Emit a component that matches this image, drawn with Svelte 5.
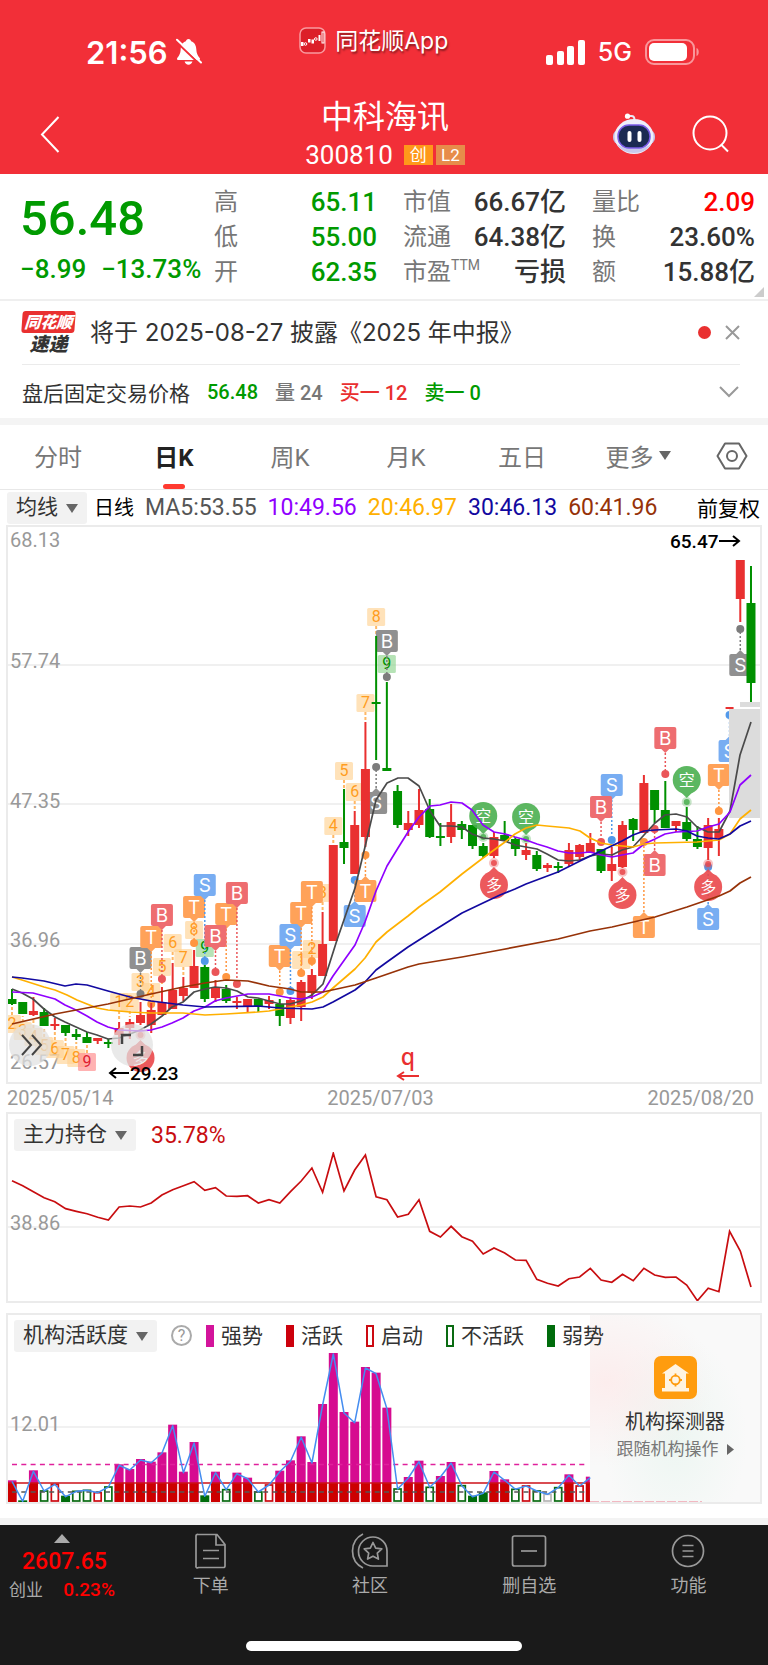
<script>
  const STEP = 10.71;
  const px = (i) => 12 + STEP * i;

  // [direction, high, low, body top, body bottom]
  const candles = [
    ['g', 989, 1005, 999, 1004], ['g', 1002, 1014, 1002, 1014], ['r', 997, 1016, 1011, 1015], ['g', 1008, 1026, 1012, 1026],
    ['r', 1018, 1030, 1024, 1026], ['g', 1025, 1036, 1025, 1033], ['g', 1029, 1040, 1034, 1037], ['g', 1032, 1043, 1037, 1043],
    ['r', 1038, 1044, 1038, 1041], ['g', 1039, 1048, 1042, 1044], ['r', 1022, 1045, 1028, 1035], ['r', 1019, 1039, 1022, 1028],
    ['r', 1002, 1025, 1015, 1023], ['r', 1003, 1033, 1010, 1025], ['r', 987, 1015, 1002, 1015], ['r', 963, 1009, 990, 1009],
    ['r', 977, 1001, 988, 996], ['r', 950, 988, 966, 988], ['g', 965, 1002, 967, 999], ['r', 980, 1002, 988, 998],
    ['g', 985, 1003, 989, 1001], ['r', 997, 1009, 1001, 1003], ['r', 999, 1012, 999, 1007], ['g', 999, 1012, 999, 1006],
    ['r', 996, 1009, 1000, 1004], ['g', 999, 1026, 1004, 1016], ['r', 997, 1024, 1000, 1018], ['r', 980, 1021, 982, 1007],
    ['r', 969, 999, 975, 993], ['r', 912, 976, 944, 976], ['r', 845, 941, 845, 941], ['g', 789, 864, 842, 848],
    ['r', 811, 874, 825, 874], ['r', 722, 847, 769, 837], ['g', 636, 760, 702, 703], ['g', 682, 770, 768, 771],
    ['g', 785, 828, 791, 825], ['r', 811, 836, 823, 830], ['r', 789, 828, 810, 825], ['g', 799, 838, 809, 837],
    ['g', 823, 846, 836, 838], ['r', 804, 843, 822, 837], ['g', 821, 839, 824, 830], ['g', 825, 849, 825, 846],
    ['g', 843, 858, 846, 856], ['r', 832, 858, 837, 856], ['g', 821, 841, 835, 841], ['g', 837, 856, 839, 849],
    ['r', 843, 860, 850, 855], ['g', 851, 871, 855, 869], ['r', 863, 872, 865, 868], ['g', 862, 873, 866, 868],
    ['r', 843, 867, 850, 864], ['r', 844, 860, 845, 857], ['r', 833, 853, 843, 853], ['g', 849, 873, 849, 871],
    ['r', 847, 881, 864, 871], ['r', 821, 868, 825, 867], ['g', 818, 841, 819, 830], ['r', 775, 833, 783, 833],
    ['g', 790, 823, 790, 810], ['g', 781, 828, 810, 828], ['r', 821, 832, 821, 826], ['g', 807, 841, 822, 839],
    ['g', 826, 849, 839, 847], ['r', 818, 860, 825, 848], ['r', 818, 856, 829, 838], ['r', 707, 709, 707, 709],
    ['r', 560, 622, 560, 599], ['g', 566, 702, 603, 683]
  ];

  const averages = [
    { color: '#4a4a4a', d: '12,989 22,993 33,999 44,1009 55,1017 65,1022 76,1027 87,1032 97,1035 108,1039 119,1038 130,1034 140,1030 151,1024 162,1016 172,1007 183,1002 194,992 205,989 215,987 226,988 237,991 248,997 258,998 269,1001 280,1004 290,1004 301,1001 312,995 323,984 337,940 355,888 365,847 376,800 387,783 398,778 408,778 419,786 430,811 440,826 451,826 462,827 472,834 483,838 494,839 505,841 515,845 526,847 537,849 547,854 558,860 569,861 580,860 590,856 601,854 612,855 622,850 633,847 644,835 655,823 665,815 676,814 687,817 697,827 708,832 719,832 730,811 740,755 751,722' },
    { color: '#9000ff', d: '12,992 33,993 44,996 55,999 65,1005 76,1010 87,1016 97,1022 108,1027 119,1030 140,1031 151,1030 162,1027 172,1023 183,1018 194,1011 205,1007 215,1001 226,998 237,996 248,994 269,994 280,996 290,998 301,999 312,997 323,992 333,976 355,945 365,922 376,891 387,866 398,848 408,832 419,817 430,806 440,805 451,802 462,803 472,810 483,825 494,832 505,834 515,837 526,840 537,844 547,847 558,851 569,853 580,853 590,852 601,855 612,857 622,855 633,853 644,844 655,839 665,834 676,832 697,831 708,827 719,824 730,812 740,785 751,775' },
    { color: '#ffb000', d: '12,977 22,980 44,987 55,990 67,995 77,1000 87,1004 97,1008 108,1010 130,1012 151,1013 183,1013 205,1015 226,1014 258,1012 269,1011 280,1009 290,1007 301,1005 312,1002 323,997 333,988 355,969 365,958 376,942 387,932 408,916 419,907 440,892 462,874 483,858 505,842 515,834 526,828 537,825 547,826 569,828 580,831 590,838 601,843 612,845 633,847 644,844 655,843 697,842 719,840 730,834 740,819 751,810' },
    { color: '#1209a0', d: '12,977 22,978 44,981 65,986 76,984 87,985 108,991 130,997 151,1001 183,1005 205,1007 258,1006 269,1007 280,1008 312,1009 323,1007 333,1002 355,990 365,982 376,970 387,962 408,947 430,933 462,913 483,903 500,895 515,889 526,884 558,872 580,861 601,851 622,841 633,835 644,831 655,830 676,829 687,831 697,836 708,838 719,839 730,834 740,826 751,821' },
    { color: '#963208', d: '12,1024 55,1014 108,1004 151,994 183,987 205,983 226,980 248,981 269,986 290,989 301,992 323,992 355,985 376,978 408,967 419,964 462,957 500,950 558,939 590,931 612,927 655,917 687,907 719,896 730,891 740,883 751,877' }
  ];

  // [digit, candle index, centre y, tone, stem end y]
  const counts = [
    ['2', 0, 1024, 'o', 1006], ['3', 1, 1031, 'o', 1016], ['4', 2, 1037, 'o', 1018], ['5', 3, 1046, 'o', 1028], ['6', 4, 1049, 'o', 1032],
    ['7', 5, 1055, 'o', 1038], ['8', 6, 1058, 'o', 1042], ['9', 7, 1062, 'r', 1045],
    ['1', 10, 1002, 'o', 1020], ['2', 11, 1002, 'o', 1017], ['3', 12, 982, 'o', 1000], ['4', 13, 992, 'o', 1002], ['5', 14, 967, 'o', 985],
    ['6', 15, 943, 'o', 961], ['7', 16, 958, 'o', 975], ['8', 17, 930, 'o', 948], ['9', 18, 948, 'g', 963],
    ['1', 27, 960, 'o', 978], ['2', 28, 949, 'o', 967], ['3', 29, 893, 'o', 910], ['4', 30, 826, 'o', 843], ['5', 31, 771, 'o', 788],
    ['6', 32, 792, 'o', 809], ['7', 33, 703, 'o', 720], ['8', 34, 617, 'o', 634], ['9', 35, 664, 'g', 682]
  ];

  // [letter, tone, candle index, centre y, dot y]
  const signals = [
    ['B', 'x', 12, 958, 994], ['T', 'o', 13, 937, 1004], ['B', 'r', 14, 915, 979], ['T', 'o', 17, 907, 943], ['S', 'b', 18, 885, 961],
    ['T', 'o', 20, 914, 977], ['B', 'r', 19, 936, 972], ['B', 'r', 21, 893, 984], ['T', 'o', 25, 956, 992], ['S', 'b', 26, 935, 991],
    ['T', 'o', 27, 913, 973], ['T', 'o', 28, 892, 961], ['S', 'b', 32, 916, 880], ['T', 'o', 33, 891, 855], ['S', 'x', 34, 803, 767],
    ['B', 'x', 35, 641, 677], ['S', 'b', 56, 785, 840], ['B', 'r', 55, 807, 842], ['B', 'r', 60, 865, 829], ['T', 'o', 59, 927, 842],
    ['B', 'r', 61, 738, 774], ['S', 'b', 65, 919, 867], ['T', 'o', 66, 775, 811], ['S', 'b', 67, 751, 715], ['S', 'x', 68, 665, 629]
  ];
  const bubbles = [
    ['空', 'g', 44, 816, 837], ['空', 'g', 48, 817, 839], ['空', 'g', 63, 780, 802],
    ['多', 'r', 45, 885, 863], ['多', 'r', 57, 895, 872], ['多', 'r', 65, 887, 864], ['多', 'r', 12, 1058, 1035]
  ];

  const holding = [317, 332, 350, 368, 380, 401, 409, 416, 427, 435, 396, 393, 396, 384, 360, 344, 332, 320, 346, 338, 363, 364, 362, 384, 374, 384, 350, 318, 279, 352, 235, 348, 285, 240, 365, 374, 426, 418, 374, 469, 486, 454, 485, 499, 537, 519, 534, 555, 556, 613, 625, 633, 611, 606, 580, 615, 622, 598, 617, 580, 600, 607, 606, 630, 677, 640, 650, 469, 528, 636];
  const holdingLine = holding.map((v, i) => `${px(i).toFixed(1)},${(1075 + v / 3).toFixed(1)}`).join(' ');

  // m: strong, G: hollow green, g: solid green, R: hollow red, x: hollow grey
  const activity = [
    ['m', 511], ['g', 571], ['m', 481], ['G', 540], ['R', 520], ['g', 557], ['G', 541], ['G', 538], ['R', 545], ['G', 528],
    ['m', 463], ['m', 477], ['m', 447], ['m', 455], ['m', 427], ['m', 344], ['m', 485], ['m', 396], ['g', 556], ['m', 485],
    ['G', 536], ['m', 488], ['m', 503], ['G', 543], ['R', 522], ['m', 482], ['m', 451], ['m', 379], ['m', 456], ['m', 282],
    ['m', 129], ['m', 306], ['m', 335], ['m', 171], ['m', 188], ['m', 293], ['G', 534], ['m', 501], ['m', 452], ['G', 529],
    ['m', 498], ['m', 456], ['G', 524], ['g', 557], ['g', 547], ['m', 483], ['m', 508], ['G', 535], ['R', 525], ['G', 540],
    ['x', 550], ['G', 530], ['m', 493], ['R', 525], ['m', 500]
  ].map(([k, v], i) => ({ k, x: px(i), y: 1310 + v / 3 }));
  const activityLine = activity.map((b) => `${b.x.toFixed(1)},${(b.y + 1).toFixed(1)}`).join(' ');
  const edge = { G: '#0a6b12', R: '#cc0a12', x: '#b5b5b5' };

  const quote = [
    [['高', '65.11', 'green'], ['低', '55.00', 'green'], ['开', '62.35', 'green']],
    [['市值', '66.67亿', ''], ['流通', '64.38亿', ''], ['市盈', '亏损', '', 'TTM']],
    [['量比', '2.09', 'hot'], ['换', '23.60%', ''], ['额', '15.88亿', '']]
  ];
  const tabs = ['分时', '日K', '周K', '月K', '五日'];
  let active = $state('日K');
  const legend = [['strong', '强势'], ['active', '活跃'], ['start', '启动'], ['idle', '不活跃'], ['weak', '弱势']];
</script>

<div class="page">
  <header>
    <div class="status">
      <div class="clock">
        <span>21:56</span>
        <svg width="27" height="28" viewBox="0 0 27 28" aria-hidden="true">
          <path d="M13.500 1c1.500 0 2.400 1 2.600 2.300 3.600 1.300 5 4.200 5.200 8 .3 4.500 1.400 6.200 3.400 8.600.7 1 .3 2-.9 2H3.200c-1.200 0-1.600-1-.9-2 2-2.400 3.100-4.100 3.400-8.600.2-3.800 1.600-6.700 5.200-8C11.100 2 12 1 13.500 1zM9.600 23.500h7.800c-.4 2-2 3.200-3.900 3.200s-3.500-1.200-3.900-3.200z" fill="#fff" />
          <path d="M2 4.500l22 21" stroke="#f22f38" stroke-width="2" />
          <path d="M2 1.800l24 22.700" stroke="#fff" stroke-width="2" stroke-linecap="round" />
        </svg>
      </div>
      <div class="brand">
        <svg width="27" height="27" viewBox="0 0 27 27" aria-hidden="true">
          <rect x="1" y="1" width="25" height="25" rx="6" fill="#dc1f29" stroke="#f99a9e" stroke-width="1.500" />
          <g fill="#fff"><rect x="2" y="15" width="2.500" height="4" /><rect x="9" y="12" width="2.500" height="3.500" /><rect x="12.500" y="12.500" width="2.500" height="4" /><rect x="19.500" y="8" width="2" height="6" /></g>
          <g fill="none" stroke="#fff"><circle cx="6.500" cy="17" r="1.300" /><circle cx="16.800" cy="12" r="1.300" /><rect x="23" y="5" width="2" height="11" /></g>
        </svg>
        <span>同花顺App</span>
      </div>
      <div class="radio">
        <svg width="39" height="25" viewBox="0 0 39 25" fill="#fff" aria-hidden="true"><rect y="15" width="7" height="10" rx="2" /><rect x="11" y="11" width="7" height="14" rx="2" /><rect x="21" y="6" width="7" height="19" rx="2" /><rect x="32" width="7" height="25" rx="2" /></svg>
        <span>5G</span>
        <svg width="55" height="26" viewBox="0 0 55 26" aria-hidden="true"><rect x="1" y="1" width="48" height="24" rx="8" fill="none" stroke="#f9979b" stroke-width="2" /><rect x="4" y="4" width="38" height="18" rx="5" fill="#fff" /><path d="M51.500 9c3 1 3 7 0 8z" fill="#f9979b" /></svg>
      </div>
    </div>
    <div class="titlebar">
      <button class="back" aria-label="返回"><svg width="20" height="37" viewBox="0 0 20 37" fill="none" stroke="#fff" stroke-width="2"><path d="M18.500 1L2 18.500 18.500 36" /></svg></button>
      <div class="title">
        <h1>中科海讯</h1>
        <p>300810 <b class="gem">创</b><b class="level">L2</b></p>
      </div>
      <div class="tools">
        <button aria-label="智能助手">
          <svg width="44" height="42" viewBox="0 0 44 42">
            <path d="M16 3h3.500c2 0 3 1.500 3 4" fill="none" stroke="#e9e9f5" stroke-width="2" /><circle cx="15.500" cy="3.200" r="2.600" fill="#fff" />
            <rect x="1" y="17" width="42" height="14" rx="6" fill="#c3bfe6" />
            <ellipse cx="22" cy="23.500" rx="19.500" ry="17.500" fill="#eeeefa" /><path d="M5 31c6 12 28 12 34 0-7 6-27 6-34 0z" fill="#c9c8ec" />
            <rect x="6" y="12" width="32" height="23" rx="11" fill="#1b2a52" stroke="#7b5be8" stroke-width="1.500" />
            <path d="M17.500 20v7M27.500 20v7" stroke="#fff" stroke-width="4" stroke-linecap="round" />
          </svg>
        </button>
        <button aria-label="搜索"><svg width="38" height="38" viewBox="0 0 38 38" fill="none" stroke="#fff" stroke-width="2"><circle cx="18" cy="18" r="16.500" /><path d="M29 29.500l7 7" /></svg></button>
      </div>
    </div>
  </header>

  <section class="quote">
    <div class="price"><strong>56.48</strong><p><span>−8.99</span><span>−13.73%</span></p></div>
    {#each quote as col}
      <dl>
        {#each col as [label, value, tone, sup]}
          <div><dt>{label}{#if sup}<sup>{sup}</sup>{/if}</dt><dd class={tone}>{value}</dd></div>
        {/each}
      </dl>
    {/each}
    <svg class="corner" width="10" height="10" viewBox="0 0 10 10" aria-hidden="true"><path d="M10 0v10H0z" fill="#ccc" /></svg>
  </section>

  <section class="news">
    <div class="express"><span>同花顺</span><em>速递</em></div>
    <a href="#notice">将于 2025-08-27 披露《2025 年中报》</a>
    <i class="dot"></i>
    <button aria-label="关闭"><svg width="15" height="15" viewBox="0 0 15 15" stroke="#999" stroke-width="2"><path d="M1 1l13 13M14 1L1 14" /></svg></button>
  </section>
  <section class="after">
    <span>盘后固定交易价格</span><b class="green">56.48</b><b class="grey">量 24</b><b class="red">买一 12</b><b class="green">卖一 0</b>
    <button aria-label="展开"><svg width="20" height="12" viewBox="0 0 20 12" fill="none" stroke="#999" stroke-width="2"><path d="M1 1l9 9 9-9" /></svg></button>
  </section>

  <nav class="tabs">
    {#each tabs as t}
      <button class:on={active === t} onclick={() => (active = t)}>{t}</button>
    {/each}
    <button>更多<svg width="12" height="10" viewBox="0 0 12 10" aria-hidden="true"><path d="M0 0h12L6 9z" fill="#666" /></svg></button>
    <button aria-label="设置"><svg width="32" height="28" viewBox="0 0 32 28" fill="none" stroke="#666" stroke-width="2"><path d="M9 1.500h14l7.500 12.500L23 26.500H9L1.500 14z" stroke-linejoin="round" /><circle cx="16" cy="14" r="5" /></svg></button>
  </nav>

  <div class="legendbar">
    <span class="pick"><select aria-label="指标"><option>均线</option></select></span>
    <span class="k">日线</span>
    <span style:color="#555">MA5:53.55</span>
    <span style:color="#9000ff">10:49.56</span>
    <span style:color="#ffb000">20:46.97</span>
    <span style:color="#1209a0">30:46.13</span>
    <span style:color="#963208">60:41.96</span>
    <button>前复权</button>
  </div>

  <div class="panel">
    <svg class="plot" viewBox="8 527 752 555" role="img" aria-label="日K线图">
      <path d="M8 665h752M8 804h752M8 944h752" stroke="#ececec" stroke-width="1.500" />
      <g class="axis"><text x="10" y="547">68.13</text><text x="10" y="668">57.74</text><text x="10" y="808">47.35</text><text x="10" y="947">36.96</text><text x="10" y="1069">26.57</text></g>

      {#each counts as [n, i, y, tone, end]}
        <g class="count {tone}">
          <line x1={px(i)} x2={px(i)} y1={end > y ? y + 9 : y - 9} y2={end} />
          <rect x={px(i) - 9} y={y - 9} width="18" height="18" rx="1.500" />
          <text x={px(i)} y={y + 5}>{n}</text>
        </g>
      {/each}
      {#each signals as [s, tone, i, y, dot]}
        {@const k = dot > y ? 1 : -1}
        <g class="signal {tone}">
          <line x1={px(i)} x2={px(i)} y1={y + 11 * k} y2={dot} />
          <circle cx={px(i)} cy={dot} r="4" />
          <path d="M{px(i) - 4} {y + 11 * k}h8l-4 {4 * k}z" />
          <rect x={px(i) - 11} y={y - 11} width="22" height="22" rx="2" />
          <text x={px(i)} y={y + 7}>{s}</text>
        </g>
      {/each}

      <path d="M740 702h20v5h-20zM729 709h31v109h-31z" fill="#dcdcdc" />
      {#each candles as [c, hi, lo, top, bottom], i}
        <g fill={c === 'r' ? '#e93030' : '#009000'}>
          <rect x={px(i) - 1} y={hi} width="2" height={lo - hi} />
          <rect x={px(i) - (i === 67 ? 4 : 4.5)} y={top} width={i === 67 ? 8 : 9} height={Math.max(bottom - top, 2)} />
        </g>
      {/each}
      {#each bubbles as [s, tone, i, y, dot]}
        {@const k = dot > y ? 1 : -1}
        <g class="bubble {tone}">
          <circle class="halo" cx={px(i)} cy={dot} r="5" /><circle cx={px(i)} cy={dot} r="3" />
          <circle cx={px(i)} cy={y} r="14" /><path d="M{px(i) - 6} {y + 12 * k}h12l-6 {6 * k}z" />
          <text x={px(i)} y={y + 6}>{s}</text>
        </g>
      {/each}
      {#each averages as line}
        <polyline points={line.d} fill="none" stroke={line.color} stroke-width="1.700" stroke-linejoin="round" />
      {/each}

      <g class="extreme">
        <text x="670" y="548">65.47</text><path d="M719 541h20m-6-5l6 5-6 5" />
        <text x="130" y="1080">29.23</text><path d="M129 1073h-19m6-5l-6 5 6 5" />
      </g>
      <g class="event"><text x="408" y="1065">q</text><path d="M419 1076h-21m6-4l-6 4 6 4" /></g>
    </svg>
    <button class="float shift" aria-label="向右"><svg width="42" height="42" viewBox="0 0 42 42" fill="none" stroke="#444" stroke-width="2"><path d="M13 11l9 10-9 10M23 11l9 10-9 10" /></svg></button>
    <button class="float expand" aria-label="全屏"><svg width="42" height="42" viewBox="0 0 42 42" fill="none" stroke="#444" stroke-width="2.500"><path d="M11 20v-9h9M22 31h9v-9" /></svg></button>
  </div>
  <div class="dates"><time>2025/05/14</time><time>2025/07/03</time><time>2025/08/20</time></div>

  <div class="panel">
    <div class="head">
      <span class="pick"><select aria-label="副图指标一"><option>主力持仓</option></select></span>
      <span class="ratio">35.78%</span>
    </div>
    <svg class="plot" viewBox="8 1152 752 149" role="img" aria-label="主力持仓">
      <path d="M8 1227h752" stroke="#ececec" stroke-width="1.500" />
      <g class="axis"><text x="10" y="1230">38.86</text></g>
      <polyline points={holdingLine} fill="none" stroke="#c80d10" stroke-width="1.700" />
    </svg>
  </div>

  <div class="panel last">
    <a class="detector" href="#detector">
      <svg width="43" height="43" viewBox="0 0 43 43" aria-hidden="true">
        <rect width="43" height="43" rx="7" fill="#ff9c0e" />
        <path d="M21.500 8L35 17.500h-3V32h3v3.500H8V32h3V17.500H8z" fill="#fff4e2" />
        <circle cx="21.500" cy="24" r="4.300" fill="none" stroke="#ff9c0e" stroke-width="1.800" /><path d="M21.500 17.500v3M21.500 27.500v3M15 24h3M25 24h3" stroke="#ff9c0e" stroke-width="1.800" />
      </svg>
      <b>机构探测器</b>
      <span>跟随机构操作<svg width="7" height="11" viewBox="0 0 7 11" aria-hidden="true"><path d="M0 0l7 5.500L0 11z" fill="#666" /></svg></span>
    </a>
    <div class="head">
      <span class="pick"><select aria-label="副图指标二"><option>机构活跃度</option></select></span>
      <button class="help" aria-label="说明">?</button>
      <ul>
        {#each legend as [kind, name]}<li><i class={kind}></i>{name}</li>{/each}
      </ul>
    </div>
    <svg class="plot" viewBox="8 1352 752 150" role="img" aria-label="机构活跃度">
      <path d="M8 1427h582" stroke="#ececec" stroke-width="1.500" />
      <g class="axis"><text x="10" y="1431">12.01</text></g>
      {#each activity as b, i}
        {@const w = i === 54 ? 4 : 9}
        {#if b.k === 'm'}
          <rect x={b.x - 4.5} y={b.y} width={w} height={1502 - b.y} fill="#d60b90" />
          <rect x={b.x - 4.5} y={Math.max(b.y, 1483)} width={w} height={1502 - Math.max(b.y, 1483)} fill="#cc0000" />
        {:else if b.k === 'g'}
          <rect x={b.x - 4.5} y={b.y} width="9" height={1502 - b.y} fill="#006c0c" />
        {:else}
          <rect x={b.x - 3.5} y={b.y + 1} width="7" height={1500 - b.y} fill="#fff" stroke={edge[b.k]} stroke-width="1.700" />
        {/if}
      {/each}
      <path d="M12 1464.500h576" stroke="#e0209c" stroke-width="1.500" stroke-dasharray="5 4.300" />
      <path d="M8 1483h582" stroke="#cc1018" stroke-width="1.700" />
      <path d="M12 1492h576" stroke="#555" stroke-width="1.500" stroke-dasharray="5 4.300" />
      <path d="M590 1501.500h112" stroke="#f2b8c2" stroke-dasharray="9 2" />
      <polyline points={activityLine} fill="none" stroke="#458df0" stroke-width="1.500" stroke-linejoin="round" />
    </svg>
  </div>

  <footer>
    <nav>
      <a class="index" href="#index"><svg width="16" height="9" viewBox="0 0 16 9" aria-hidden="true"><path d="M8 0l8 9H0z" fill="#aaa" /></svg><strong>2607.65</strong><span>创业 <b>0.23%</b></span></a>
      <a href="#order"><svg width="34" height="36" viewBox="0 0 34 36"><path d="M4 1.500h19l8 10V33a1.500 1.500 0 0 1-1.500 1.500h-25A1.500 1.500 0 0 1 2 33V3a1.500 1.500 0 0 1 2-1.500zM22 2v10h9M9 17.500h16M9 25.500h16" /></svg>下单</a>
      <a href="#community"><svg width="38" height="36" viewBox="0 0 38 36"><path d="M12 1C-2 8-2 28 12 35M22 4a14 14 0 0 0 0 29h14V18A14 14 0 0 0 22 4z" /><path d="M22 9.500l2.700 5.600 6.100.8-4.500 4.200 1.100 6-5.400-2.900-5.400 2.900 1.100-6-4.500-4.200 6.100-.8z" stroke-linejoin="round" /></svg>社区</a>
      <a href="#remove"><svg width="36" height="36" viewBox="0 0 36 36"><rect x="1.500" y="3" width="33" height="30" rx="2" /><path d="M10 18h16" /></svg>删自选</a>
      <a href="#features"><svg width="36" height="36" viewBox="0 0 36 36"><circle cx="18" cy="18" r="15.500" /><path d="M12.500 12.500h11M12.500 18h11M12.500 23.500h11" /></svg>功能</a>
    </nav>
    <div class="home"></div>
  </footer>
</div>

<style>
  :global(body) { background: #fff; }
  .page { font-family: Roboto, "Noto Sans CJK SC", sans-serif; color: #333; background: #fff; }
  button { border: 0; padding: 0; background: none; font: inherit; color: inherit; }
  button svg { display: block; }
  a { color: inherit; text-decoration: none; }
  p, h1, dl, dd, ul { margin: 0; padding: 0; }
  .green { color: #009a00; }
  .red { color: #e93030; }
  .grey { color: #777; }
  .hot { color: #f00; }

  header { background: #f22f38; color: #fff; }
  .status { display: flex; justify-content: space-between; height: 84px; padding-left: 86px; padding-right: 68px; }
  .clock { display: flex; align-items: center; gap: 7px; padding-top: 20px; font: 600 31px Inter, sans-serif; }
  .brand { display: flex; align-items: center; gap: 9px; padding-bottom: 3px; font-size: 23px; line-height: 28px; text-shadow: 1px 2px 2px rgba(0, 0, 0, .45); font-family: Inter, "Noto Sans CJK SC", sans-serif; }
  .radio { display: flex; align-items: center; justify-content: flex-end; gap: 13px; padding-top: 20px; font: 500 25px Inter, sans-serif; }
  .titlebar { display: grid; grid-template-columns: 1fr auto 1fr; align-items: center; height: 90px; padding: 0 38px 0 40px; }
  .back { justify-self: start; padding-top: 10px; }
  .title { padding-top: 7px; text-align: center; }
  .title h1 { font-size: 32px; font-weight: 400; line-height: 44px; }
  .title p { display: flex; align-items: center; justify-content: center; gap: 3px; font-size: 26px; line-height: 32px; }
  .title b { width: 29px; height: 20px; font-size: 17px; font-weight: 400; line-height: 20px; }
  .title .gem { margin-left: 8px; background: #ff981a; }
  .title .level { background: #e78c4a; }
  .tools { display: flex; align-items: center; justify-content: flex-end; gap: 36px; padding-top: 10px; }

  .quote { position: relative; display: grid; grid-template-columns: 168px 1fr 1fr 1fr; gap: 26px; padding: 11px 13px 9px 20px; border-bottom: 2px solid #efefef; }
  .price { white-space: nowrap; color: #009a00; }
  .price strong { display: block; font-size: 49px; font-weight: 500; line-height: 68px; }
  .price p { display: flex; gap: 15px; font-size: 26px; font-weight: 500; line-height: 32px; }
  .quote dl div { display: flex; justify-content: space-between; font-size: 26px; line-height: 35px; white-space: nowrap; }
  dt { font-size: 24px; color: #777; }
  dt sup { font-size: 14px; line-height: 0; vertical-align: 10px; }
  dd { font-weight: 500; }
  .corner { position: absolute; right: 4px; bottom: 2px; }

  .news { display: flex; align-items: center; height: 63px; margin: 0 28px 0 22px; border-bottom: 1px solid #ebebeb; font-family: Inter, "Noto Sans CJK SC", sans-serif; font-size: 24px; white-space: nowrap; }
  .express { width: 53px; margin-right: 15px; text-align: center; font-style: italic; font-weight: 900; line-height: 20px; }
  .express span { display: block; transform: skewX(-4deg); border-radius: 3px; background: #e93030; color: #fff; font-size: 16px; line-height: 22px; }
  .express em { font-size: 19px; }
  .news a { flex: 1; padding-bottom: 4px; }
  .dot { width: 13px; height: 13px; margin-right: 14px; border-radius: 50%; background: #e93030; }
  .after { display: flex; align-items: center; gap: 17px; height: 53px; padding: 0 29px 0 22px; font-size: 21px; border-bottom: 7px solid #f4f4f4; }
  .after b { font-size: 20px; font-weight: 500; }
  .after button { margin-left: auto; }

  .tabs { display: grid; grid-template-columns: repeat(6, 116fr) 72fr; height: 64px; border-bottom: 1px solid #e8e8e8; }
  .tabs button { position: relative; display: flex; align-items: center; justify-content: center; gap: 5px; padding-bottom: 3px; font-size: 24px; color: #777; }
  .tabs .on { color: #222; font-weight: 700; }
  .tabs .on::after { content: ""; position: absolute; bottom: 0; width: 22px; height: 5px; border-radius: 3px; background: #ff3a30; }

  .pick { position: relative; display: inline-flex; border-radius: 3px; background: #f2f2f2; }
  .pick::after { content: ""; position: absolute; right: 9px; top: 12px; border: 6px solid transparent; border-top: 9px solid #666; border-bottom: 0; pointer-events: none; }
  select { appearance: none; height: 32px; border: 0; padding: 0 29px 2px 9px; background: none; font: inherit; font-size: 21px; color: #333; }
  .legendbar { display: flex; align-items: center; gap: 11px; height: 35px; padding: 0 8px 0 7px; font-size: 23px; white-space: nowrap; }
  .legendbar .pick { margin-right: -4px; }
  .legendbar .k { padding-bottom: 2px; color: #000; font-size: 20px; }
  .legendbar button { margin-left: auto; padding-bottom: 2px; color: #000; font-size: 21px; }

  .panel { position: relative; margin: 0 6px; border: 2px solid #ebebeb; }
  .plot { position: relative; display: block; width: 100%; }
  .axis text { font-size: 20px; fill: #999; }
  .count text { font-size: 16px; text-anchor: middle; fill: #ff9d1e; }
  .count rect { fill: #ffd394; opacity: .65; }
  .count line { stroke: #ffb866; stroke-width: 2; stroke-dasharray: 3 2; }
  .count.r rect { fill: #f88; }
  .count.r text { fill: #e02030; }
  .count.g rect { fill: #8fd48f; }
  .count.g text { fill: #009000; }
  .signal text { font-family: Inter, sans-serif; font-size: 19px; text-anchor: middle; fill: #fff; }
  .signal line { stroke: var(--dot); stroke-width: 1.500px; stroke-dasharray: 2 2; }
  .signal circle { fill: var(--dot); }
  .signal rect, .signal path { fill: var(--tag); }
  .signal.r { --tag: #ee6d70; --dot: #ea5558; }
  .signal.o { --tag: #ffa259; --dot: #ff9640; }
  .signal.b { --tag: #78adf2; --dot: #5299ea; }
  .signal.x { --tag: #909090; --dot: #7c7c7c; }
  .bubble { opacity: .9; }
  .bubble.g { fill: #4bb050; }
  .bubble.r { fill: #ea484b; }
  .bubble .halo { opacity: .35; }
  .bubble text { font-size: 16px; text-anchor: middle; fill: #fff; }
  .extreme text { font-size: 19px; font-weight: 500; fill: #000; }
  .extreme path { fill: none; stroke: #000; stroke-width: 2px; }
  .event text { font-family: "Noto Sans", sans-serif; font-size: 23px; font-weight: 500; text-anchor: middle; fill: #e93030; }
  .event path { fill: none; stroke: #e93030; stroke-width: 2px; }
  .float { position: absolute; bottom: 16px; border-radius: 50%; background: rgba(225, 225, 225, .72); }
  .shift { left: 1px; }
  .expand { left: 103px; }
  .dates { display: flex; justify-content: space-between; margin: 0 14px 0 7px; font-size: 20px; line-height: 28px; color: #999; }

  .head { position: relative; display: flex; align-items: center; gap: 15px; box-sizing: border-box; height: 38px; padding: 4px 6px 0; }
  .ratio { font-size: 23px; color: #c80d10; }
  .panel + .panel { margin-top: 10px; }
  .last .head { height: 37px; gap: 14px; }
  .help { width: 21px; height: 21px; border: 2px solid #aaa; border-radius: 50%; font-size: 16px; line-height: 16px; color: #999; }
  .head ul { display: flex; gap: 23px; list-style: none; font-size: 21px; line-height: 30px; white-space: nowrap; }
  .head li { display: flex; align-items: center; gap: 7px; }
  .head i { box-sizing: border-box; width: 8px; height: 22px; }
  .strong { background: #d3149b; }
  .active { background: #cc000c; }
  .start { border: 2px solid #cc0a12; }
  .idle { border: 2px solid #0a6b12; }
  .weak { background: #006c0c; }
  .detector { position: absolute; top: 0; right: 0; bottom: 0; display: flex; flex-direction: column; align-items: center; box-sizing: border-box; width: calc(100% * 170 / 752); padding-top: 41px; background: radial-gradient(ellipse at 10% 36%, rgba(255, 225, 225, .5), transparent 50%), radial-gradient(ellipse at 50% 66%, rgba(225, 243, 235, .5), transparent 60%), #f9f9f9; }
  .detector b { margin-top: 9px; font-size: 20px; font-weight: 400; line-height: 28px; }
  .detector span { display: flex; align-items: center; gap: 8px; font-size: 17px; line-height: 26px; color: #777; }

  footer { margin-top: 14px; padding-bottom: 14px; border-top: 7px solid #f3f3f3; background: #1a1a1a; color: #aaa; }
  footer nav { display: grid; grid-template-columns: 131fr repeat(4, 159fr); height: 116px; }
  footer a { display: flex; flex-direction: column; align-items: center; padding-top: 8px; font-size: 18px; line-height: 34px; }
  footer a > svg { fill: none; stroke: #999; stroke-width: 1.700px; }
  .index { align-items: flex-start; padding-left: 9px; font-size: 17px; line-height: 28px; }
  .index svg { margin: 1px 0 0 45px; stroke: none; }
  .index strong { margin: 5px 0 0 13px; font-size: 23px; font-weight: 500; color: #f00; }
  .index b { margin-left: 16px; font-size: 19px; font-weight: 500; color: #f00; }
  .home { width: 36%; height: 10px; margin: 0 auto; border-radius: 5px; background: #fff; }
</style>
